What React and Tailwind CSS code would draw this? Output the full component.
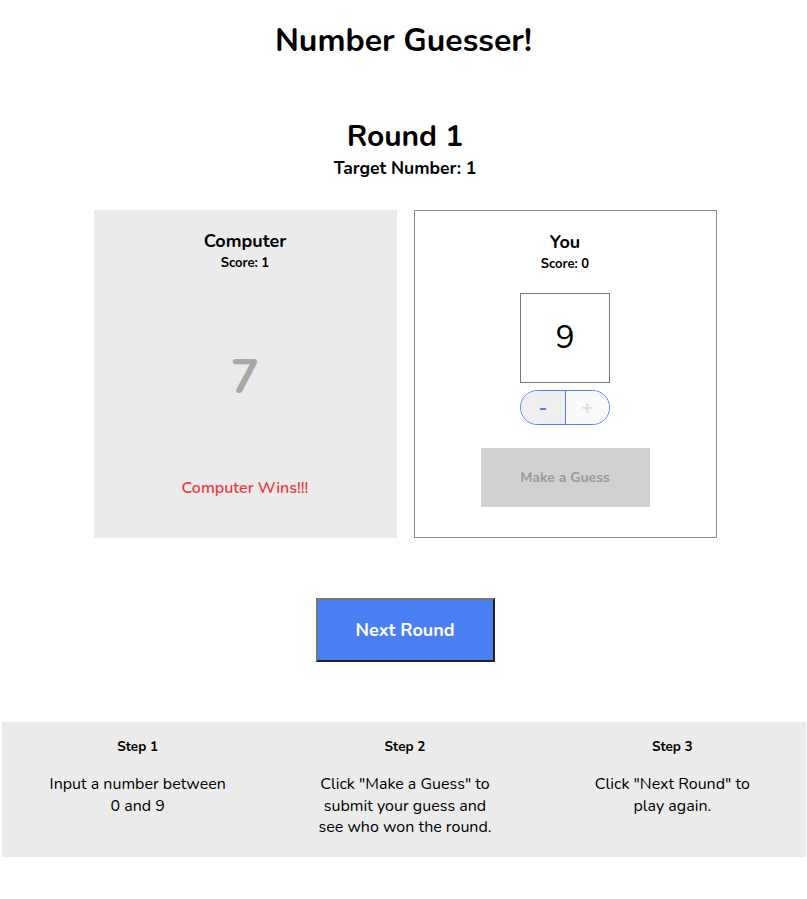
export default function App() {
  return (
    <div className="min-h-[899px] bg-white text-black" style={{ fontFamily: 'Nunito, Lato, "Noto Sans", sans-serif' }}>
      <h1 className="pt-[21px] text-center text-[32px] leading-[40px] font-bold">Number Guesser!</h1>
      <h2 className="mt-[58px] pl-[3px] text-center text-[30px] leading-[36px] font-bold">Round 1</h2>
      <p className="mt-[1px] pl-[3px] text-center text-[17.5px] leading-[24px] font-bold">Target Number: 1</p>

      <div className="mt-[30px] flex justify-center gap-[17px] pl-[3px]">
        <div className="flex h-[328px] w-[303px] flex-col items-center bg-[#ebebeb]">
          <div className="mt-[19px] text-[18px] leading-[24px] font-bold">Computer</div>
          <div className="mt-[1px] text-[13px] leading-[18px] font-bold">Score: 1</div>
          <div className="mt-[77px] text-[48px] leading-[56px] font-bold text-[#a8a8a8]">7</div>
          <div className="mt-[72px] text-[16px] leading-[22px] font-semibold text-[#ef3a42]">Computer Wins!!!</div>
        </div>
        <div className="flex h-[328px] w-[303px] flex-col items-center border border-[#8a8a8a] bg-white">
          <div className="mt-[19px] text-[18px] leading-[24px] font-bold">You</div>
          <div className="mt-[1px] text-[13px] leading-[18px] font-bold">Score: 0</div>
          <div className="mt-[20px] flex h-[90px] w-[90px] items-center justify-center border border-[#767676] text-[32px] leading-none">9</div>
          <div className="mt-[7px] flex h-[35px] w-[90px] overflow-hidden rounded-full border border-[#4c7ef3]">
            <div className="flex flex-1 items-center justify-center border-r border-[#4c7ef3] bg-[#efefef] text-[20px] font-bold text-[#4c7ef3]">-</div>
            <div className="flex flex-1 items-center justify-center bg-[#f9f9f9] text-[20px] font-bold text-[#dcdcdc]">+</div>
          </div>
          <div className="mt-[23px] flex h-[59px] w-[169px] items-center justify-center bg-[#d1d1d1] text-[14px] font-bold text-[#9a9a9a]">Make a Guess</div>
        </div>
      </div>

      <div className="mt-[60px] flex justify-center pl-[3px]">
        <div className="flex h-[64px] w-[179px] items-center justify-center border-2 border-[#767676] border-r-[#222] border-b-[#222] bg-[#4a7ff3] text-[18px] font-bold text-white">Next Round</div>
      </div>

      <div className="mt-[60px] ml-[2px] mr-[1px] grid h-[135px] grid-cols-3 bg-[#ebebeb] pl-[2px] text-center">
        <div>
          <div className="mt-[16px] text-[13.5px] leading-[18px] font-bold">Step 1</div>
          <div className="mt-[18px] text-[16px] leading-[21.5px]">Input a number between<br />0 and 9</div>
        </div>
        <div>
          <div className="mt-[16px] text-[13.5px] leading-[18px] font-bold">Step 2</div>
          <div className="mt-[18px] text-[16px] leading-[21.5px]">Click "Make a Guess" to<br />submit your guess and<br />see who won the round.</div>
        </div>
        <div>
          <div className="mt-[16px] text-[13.5px] leading-[18px] font-bold">Step 3</div>
          <div className="mt-[18px] text-[16px] leading-[21.5px]">Click "Next Round" to<br />play again.</div>
        </div>
      </div>
    </div>
  );
}
